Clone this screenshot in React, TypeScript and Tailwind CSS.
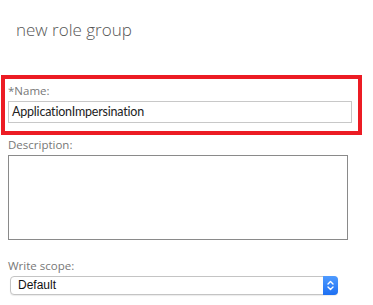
export default function App() {
  return (
    <div className="w-[373px] h-[305px] bg-white overflow-hidden font-['Open_Sans',sans-serif] text-[#444]">
      {/* Title */}
      <div className="pl-[16px] pt-[18px] h-[75px]">
        <h1 className="text-[17px] font-light leading-[24px] text-[#555]">new role group</h1>
      </div>

      {/* Highlighted name field */}
      <div className="ml-[1px] w-[361px] h-[60px] border-4 border-[#ec1c24] pl-[3px] pr-[6px]">
        <div className="text-[11.5px] leading-[16px] text-[#777] pt-[4px]">*Name:</div>
        <div className="mt-[2px] h-[22px] border border-[#c8c8c8] flex items-center pl-[3px] text-[12.5px] tracking-[-0.2px] text-[#222] font-['Lato',sans-serif]">
          ApplicationImpersination
        </div>
      </div>

      {/* Description */}
      <div className="pl-[8px] pt-[2px]">
        <div className="text-[11.5px] leading-[16px] text-[#777]">Description:</div>
        <textarea className="block mt-[2px] w-[340px] h-[85px] border border-[#8a8a8a] resize-none outline-none" />
      </div>

      {/* Write scope */}
      <div className="pl-[8px] pt-[18px]">
        <div className="text-[11.5px] leading-[16px] text-[#777]">Write scope:</div>
        <div className="ml-[2px] mt-[2px] w-[328px] h-[19px] flex rounded-[4px] border border-[#c4c4c4] bg-white shadow-[0_1px_1px_rgba(0,0,0,0.08)]">
          <span className="flex-1 pl-[7px] text-[12px] leading-[17px] text-[#111] font-['Liberation_Sans',sans-serif]">Default</span>
          <span className="w-[15px] -my-px -mr-px rounded-r-[4px] bg-gradient-to-b from-[#4f9bff] to-[#1d6ff2] flex items-center justify-center">
            <svg width="9" height="13" viewBox="0 0 9 13" fill="none" stroke="white" strokeWidth="1.4" strokeLinecap="round" strokeLinejoin="round">
              <path d="M2 5 L4.5 2.5 L7 5" />
              <path d="M2 8 L4.5 10.5 L7 8" />
            </svg>
          </span>
        </div>
      </div>
    </div>
  );
}
